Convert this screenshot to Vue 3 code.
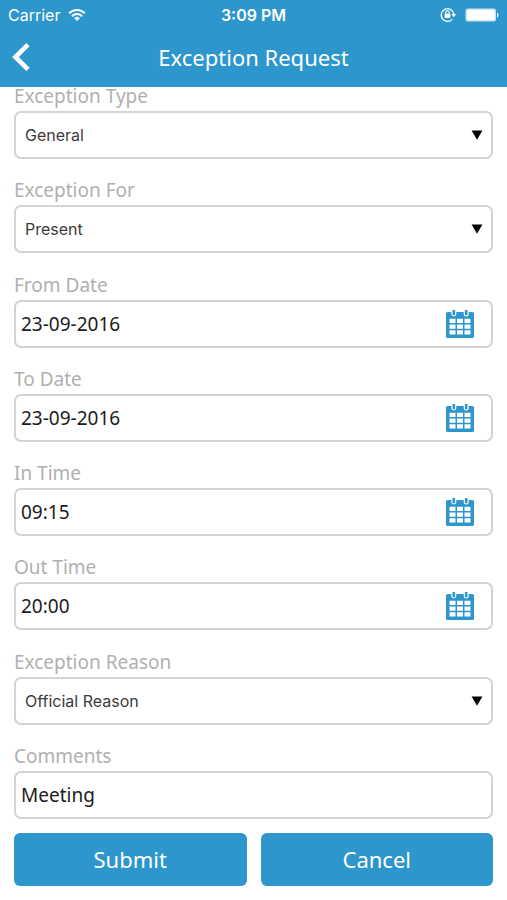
<script setup>
import { reactive } from 'vue'

const fields = reactive([
  { id: 'type', label: 'Exception Type', kind: 'select', value: 'General' },
  { id: 'for', label: 'Exception For', kind: 'select', value: 'Present' },
  { id: 'from', label: 'From Date', kind: 'picker', value: '23-09-2016' },
  { id: 'to', label: 'To Date', kind: 'picker', value: '23-09-2016' },
  { id: 'in', label: 'In Time', kind: 'picker', value: '09:15' },
  { id: 'out', label: 'Out Time', kind: 'picker', value: '20:00' },
  { id: 'reason', label: 'Exception Reason', kind: 'select', value: 'Official Reason' },
  { id: 'comments', label: 'Comments', kind: 'text', value: 'Meeting' },
])
</script>

<template>
  <div class="screen">
    <header class="header">
      <div class="status">
        <div class="carrier">
          <span>Carrier</span>
          <svg width="18" height="14" viewBox="0 0 18 14" fill="none" stroke="#fff" stroke-width="2">
            <path d="M1.2 5.2a11 11 0 0 1 15.6 0" />
            <path d="M4 8.2a7 7 0 0 1 10 0" />
            <path d="M9 13 6.2 10.2a4 4 0 0 1 5.6 0z" fill="#fff" stroke="none" />
          </svg>
        </div>
        <span class="clock">3:09 PM</span>
        <div class="indicators">
          <svg width="17" height="16" viewBox="0 0 17 16" fill="none" stroke="#fff">
            <path d="M12.2 12.3A6.3 6.3 0 1 1 13.8 7.2" stroke-width="1.2" />
            <path d="M11.2 7h5l-2.5 3.2z" fill="#fff" stroke="none" />
            <path d="M5.8 7V5.6a1.7 1.7 0 0 1 3.4 0V7" stroke-width="1.1" />
            <path d="M4.7 6.7h5.6v4.2H4.7z" fill="#fff" stroke="none" />
          </svg>
          <svg width="34" height="14" viewBox="0 0 34 14">
            <rect x="0.5" y="0.5" width="30.5" height="13" rx="2.5" fill="#fff" fill-opacity=".75" />
            <rect x="2" y="2" width="27.5" height="10" rx="1" fill="#fff" />
            <path d="M32 4.5q1.6 1 1.6 2.5T32 9.5z" fill="#fff" />
          </svg>
        </div>
      </div>
      <div class="titlebar">
        <button class="back" type="button" aria-label="Back">
          <svg width="18" height="28" viewBox="0 0 18 28" fill="none" stroke="#fff" stroke-width="4.6">
            <path d="M16 1.6 3.4 14 16 26.4" />
          </svg>
        </button>
        <h1>Exception Request</h1>
      </div>
    </header>

    <form class="form" @submit.prevent>
      <div class="fields">
        <div v-for="field in fields" :key="field.id" class="field">
          <label :for="field.id">{{ field.label }}</label>
          <div class="box">
            <template v-if="field.kind === 'select'">
              <select :id="field.id" v-model="field.value">
                <option>{{ field.value }}</option>
              </select>
              <svg class="arrow" width="12" height="10" viewBox="0 0 12 10">
                <path d="M.6.5h10.8L6 9.8z" fill="#000" />
              </svg>
            </template>
            <input v-else :id="field.id" v-model="field.value" type="text" />
            <button v-if="field.kind === 'picker'" class="pick" type="button" :aria-label="'Choose ' + field.label">
              <svg width="30" height="30" viewBox="0 0 30 30">
                <path d="M2.6 3h24.8a1.6 1.600 0 0 1 1.600 1.600V27.400a1.600 1.600 0 0 1-1.600 1.600H2.600A1.600 1.600 0 0 1 1 27.400V4.600A1.600 1.600 0 0 1 2.600 3z" fill="#2d96cd" />
                <path d="M6.300 0h5v5a2.500 2.500 0 0 1-5 0zM18.700 0h5v5a2.500 2.500 0 0 1-5 0z" fill="#fff" />
                <path d="M7.500 1h2.600v4.200a1.300 1.300 0 0 1-2.600 0zM19.900 1h2.600v4.200a1.300 1.300 0 0 1-2.600 0z" fill="#2d96cd" />
                <path
                  d="M4.500 9.800h6v4.200h-6zM12 9.800h6v4.200h-6zM19.500 9.800h6v4.200h-6zM4.500 15.500h6v4.200h-6zM12 15.500h6v4.200h-6zM19.500 15.500h6v4.200h-6zM4.500 21.200h6v4.200h-6zM12 21.200h6v4.200h-6zM19.500 21.200h6v4.200h-6z"
                  fill="#fff"
                />
              </svg>
            </button>
          </div>
        </div>
      </div>
      <div class="actions">
        <button type="submit">Submit</button>
        <button type="button">Cancel</button>
      </div>
    </form>
  </div>
</template>

<style>
body {
  background: #fff;
}
</style>

<style scoped>
* {
  box-sizing: border-box;
}
.screen {
  min-height: 100vh;
  display: flex;
  flex-direction: column;
  font-family: "Noto Sans", sans-serif;
}
svg {
  display: block;
}
button {
  margin: 0;
  padding: 0;
  border: 0;
  background: none;
  font-family: inherit;
}
.header {
  position: sticky;
  top: 0;
  z-index: 1;
  background: #2d96cd;
  color: #fff;
}
.status {
  display: grid;
  grid-template-columns: 1fr auto 1fr;
  align-items: center;
  height: 30px;
  padding: 0 8px;
  font-family: Inter, sans-serif;
  font-size: 16px;
}
.carrier,
.indicators {
  display: flex;
  align-items: center;
  gap: 8px;
}
.indicators {
  justify-content: flex-end;
}
.clock {
  font-weight: 600;
}
.titlebar {
  display: grid;
  grid-template-columns: 40px 1fr 40px;
  align-items: center;
  height: 57px;
  padding-bottom: 3px;
}
.back {
  padding-left: 12px;
}
h1 {
  margin: 0;
  font-size: 22px;
  line-height: 30px;
  font-weight: 400;
  text-align: center;
}
.form {
  flex: 1;
  display: flex;
  flex-direction: column;
  gap: 14px;
  margin-top: -4px;
  padding: 0 14px 14px;
}
.fields {
  flex: 1;
  display: flex;
  flex-direction: column;
  justify-content: space-between;
}
.field {
  display: flex;
  flex-direction: column;
  gap: 2px;
}
label {
  font-size: 19px;
  line-height: 26px;
  color: #b0b0b0;
}
.box {
  display: flex;
  align-items: center;
  height: 48px;
  border: 2px solid #d3d3d3;
  border-radius: 7px;
}
select,
input {
  flex: 1;
  min-width: 0;
  height: 100%;
  margin: 0;
  border: 0;
  outline: 0;
  background: none;
}
select {
  appearance: none;
  padding: 0 9px;
  font-family: Inter, sans-serif;
  font-size: 16px;
  color: #3c3c3c;
}
input {
  padding: 0 5px;
  font-family: inherit;
  font-size: 19px;
  color: #1c1c1c;
}
.arrow {
  margin-right: 8px;
}
.pick {
  margin-right: 16px;
}
.actions {
  display: grid;
  grid-template-columns: 1fr 1fr;
  gap: 14px;
}
.actions button {
  height: 53px;
  padding-bottom: 2px;
  border-radius: 6px;
  background: #2d96cd;
  color: #fff;
  font-size: 22px;
}
</style>
